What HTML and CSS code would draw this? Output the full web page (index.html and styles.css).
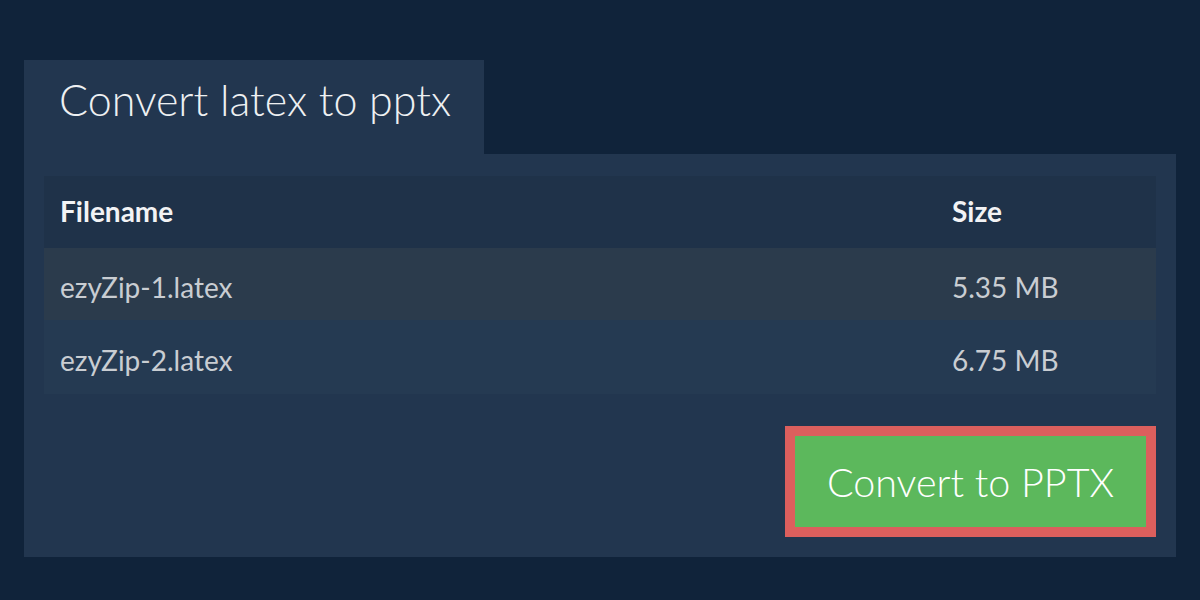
FILE: index.html
```html
<!DOCTYPE html>
<html>
<head>
<meta charset="utf-8">
<link rel="stylesheet" href="styles.css">
</head>
<body>
<div class="page">
  <div class="tab"><h1 class="title">Convert latex to pptx</h1></div>
  <div class="panel">
    <div class="table">
      <div class="row head">
        <div class="cell">Filename</div>
        <div class="cell">Size</div>
      </div>
      <div class="row odd">
        <div class="cell">ezyZip-1.latex</div>
        <div class="cell">5.35 MB</div>
      </div>
      <div class="row even">
        <div class="cell">ezyZip-2.latex</div>
        <div class="cell">6.75 MB</div>
      </div>
    </div>
    <div class="actions">
      <button class="convert">Convert to PPTX</button>
    </div>
  </div>
</div>
</body>
</html>
```

FILE: styles.css
```css
html, body {
  margin: 0;
  padding: 0;
  background: #10233a;
  font-family: Lato, "Open Sans", sans-serif;
}
.page {
  padding: 60px 24px 0 24px;
}
.tab {
  width: 460px;
  height: 94px;
  background: #22364f;
  box-sizing: border-box;
  padding-left: 35px;
  display: flex;
  align-items: center;
}
.title {
  margin: 0;
  font-weight: 300;
  font-size: 43px;
  color: #eef0f2;
  line-height: 1;
  padding-bottom: 16px;
}
.panel {
  background: #22364f;
  padding: 22px 20px 20px 20px;
}
.table {
  display: flex;
  flex-direction: column;
}
.row {
  display: grid;
  grid-template-columns: 892px 1fr;
  height: 72px;
  align-items: center;
  font-size: 28px;
}
.row .cell {
  padding-left: 16px;
  line-height: 1;
}
.head {
  background: #1f3249;
  color: #f2f3f5;
  font-weight: 700;
}
.head .cell {
  padding-bottom: 2px;
}
.odd {
  background: #2b3b4c;
  color: #c9cdd2;
}
.even {
  background: #253a52;
  color: #c9cdd2;
  height: 74px;
}
.odd .cell,
.even .cell {
  padding-top: 6px;
}
.actions {
  display: flex;
  justify-content: flex-end;
  margin-top: 32px;
}
.convert {
  width: 371px;
  height: 111px;
  background: #5cb85c;
  border: 10px solid #dc5f5d;
  color: #ffffff;
  font-family: Lato, "Open Sans", sans-serif;
  font-weight: 300;
  font-size: 39.5px;
  padding: 0;
  box-sizing: border-box;
}
```
